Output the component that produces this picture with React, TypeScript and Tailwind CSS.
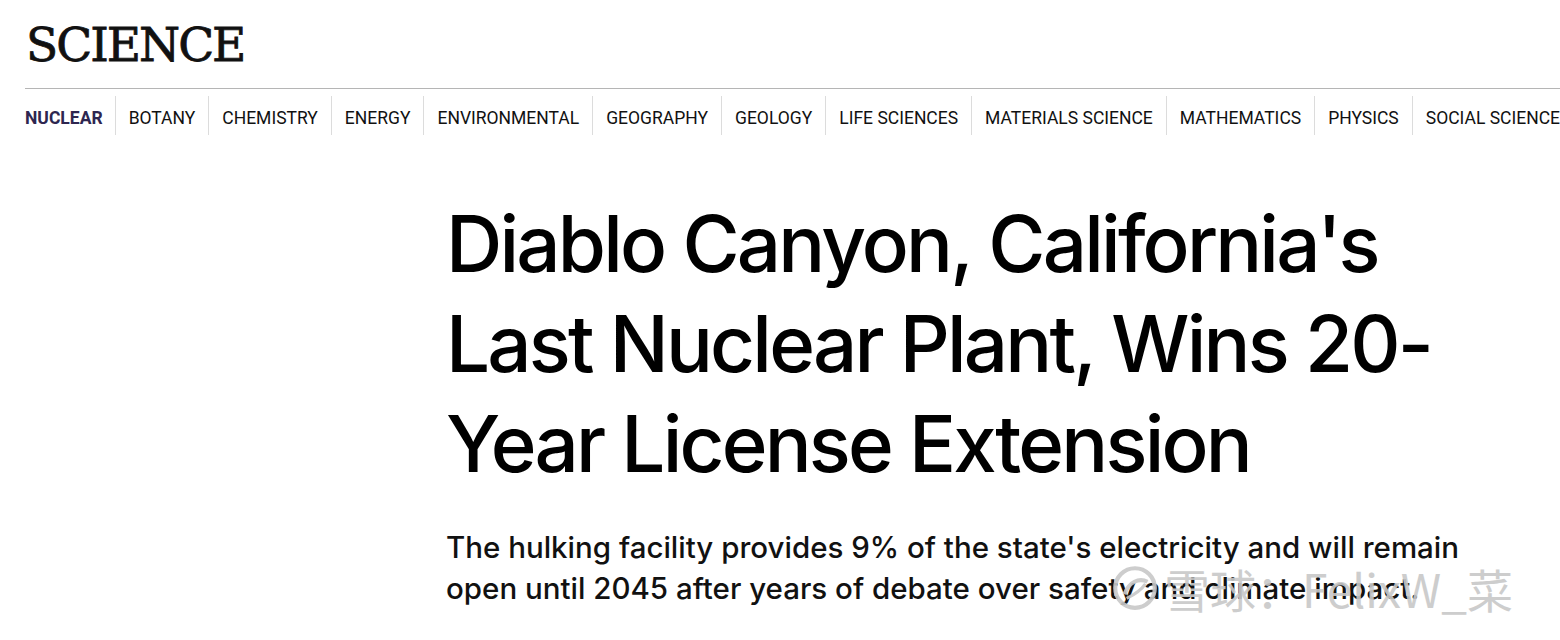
import React from "react";

const cats = [
  "NUCLEAR",
  "BOTANY",
  "CHEMISTRY",
  "ENERGY",
  "ENVIRONMENTAL",
  "GEOGRAPHY",
  "GEOLOGY",
  "LIFE SCIENCES",
  "MATERIALS SCIENCE",
  "MATHEMATICS",
  "PHYSICS",
  "SOCIAL SCIENCES",
];

export default function App() {
  return (
    <div className="relative w-[1560px] h-[640px] overflow-hidden bg-white text-black">
      <div className="pl-[25px]">
        <div className="h-[89px] pt-[17px] border-b border-[#b5b5b5]">
          <h1
            className="text-[47px] leading-[56px] font-normal tracking-[-2px] text-[#111] pl-[1px] [-webkit-text-stroke:0.8px_#111]"
            style={{ fontFamily: '"DejaVu Serif", serif' }}
          >
            SCIENCE
          </h1>
        </div>
        <nav
          className="flex whitespace-nowrap overflow-hidden pt-[7px] h-[46px]"
          style={{ fontFamily: 'Roboto, "Liberation Sans", sans-serif' }}
        >
          {cats.map((c, i) => (
            <div
              key={c}
              className={
                i === 0
                  ? "flex items-center pt-[5px] pr-[12px] h-[39px] text-[17.5px] font-bold text-[#2e2650]"
                  : "flex items-center pt-[5px] px-[13px] h-[39px] text-[17.5px] text-[#111] border-l border-[#dcdcdc]"
              }
            >
              {c}
            </div>
          ))}
        </nav>
      </div>
      <div
        className="ml-[446px] mt-[59px]"
        style={{ fontFamily: '"Inter", "Noto Sans", sans-serif' }}
      >
        <h2 className="text-[78px] leading-[100px] font-medium tracking-[-2.8px] text-black">
          Diablo Canyon, California's
          <br />
          Last Nuclear Plant, Wins 20-
          <br />
          Year License Extension
        </h2>
        <p className="mt-[33px] text-[29.5px] leading-[41px] font-medium tracking-[0px] text-[#111]">
          The hulking facility provides 9% of the state's electricity and will remain
          <br />
          open until 2045 after years of debate over safety and climate impact.
        </p>
      </div>
      <div
        className="absolute left-[1110px] top-[563px] flex items-center gap-1 text-[46px] leading-none text-[#c8c8c8] opacity-90 pointer-events-none"
        style={{ fontFamily: '"Noto Sans CJK SC", "Noto Sans", sans-serif' }}
      >
        <svg width="50" height="50" viewBox="0 0 48 48" fill="none">
          <circle cx="24" cy="24" r="19" stroke="#c8c8c8" strokeWidth="4" />
          <path d="M14 30 C18 18 28 14 36 18" stroke="#c8c8c8" strokeWidth="4" fill="none" />
          <path d="M16 34 C24 30 30 26 34 20" stroke="#c8c8c8" strokeWidth="3" fill="none" />
        </svg>
        <span>雪球：FelixW_菜</span>
      </div>
    </div>
  );
}
